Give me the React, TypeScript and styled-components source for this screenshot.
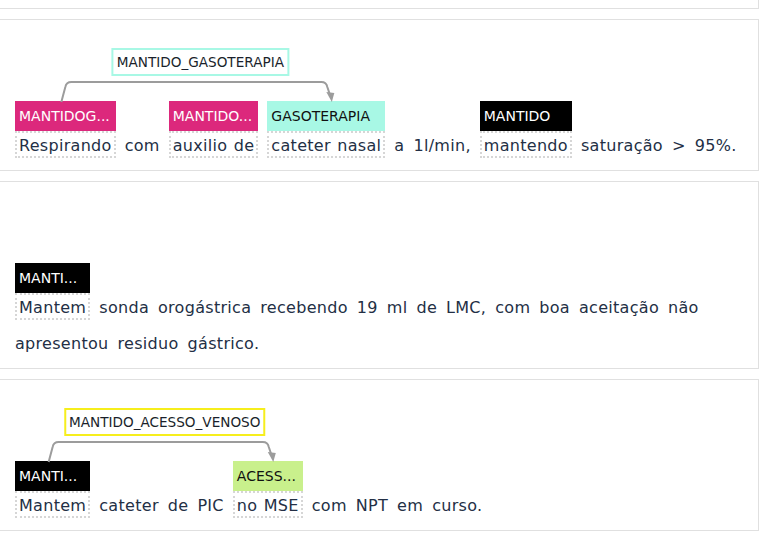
import React, { useLayoutEffect, useRef, useState } from "react";
import styled, { createGlobalStyle } from "styled-components";

const Global = createGlobalStyle`
  html, body { margin: 0; padding: 0; background: #ffffff; }
  body { font-family: "DejaVu Sans", "Liberation Sans", sans-serif; overflow: hidden; }
`;

type Kind = "magenta" | "aqua" | "black" | "green";

const labelColors: Record<Kind, { bg: string; fg: string }> = {
  magenta: { bg: "#dc287c", fg: "#ffffff" },
  aqua: { bg: "#a8f8e5", fg: "#111111" },
  black: { bg: "#000000", fg: "#ffffff" },
  green: { bg: "#c9f08c", fg: "#111111" },
};

const relationBorders: Record<string, string> = {
  aqua: "#a8f8e5",
  yellow: "#f6ee1c",
};

interface Token {
  id?: string;
  text: string;
  label?: string;
  kind?: Kind;
}

interface Relation {
  from: string;
  to: string;
  label: string;
  color: string;
}

interface Sentence {
  tokens: Token[];
  relations: Relation[];
}

const words = (s: string): Token[] => s.split(" ").map((text) => ({ text }));

const sentences: Sentence[] = [
  {
    tokens: [
      { id: "a", text: "Respirando", label: "MANTIDOG...", kind: "magenta" },
      ...words("com"),
      { id: "b", text: "auxilio de", label: "MANTIDO...", kind: "magenta" },
      { id: "c", text: "cateter nasal", label: "GASOTERAPIA", kind: "aqua" },
      ...words("a 1l/min,"),
      { id: "d", text: "mantendo", label: "MANTIDO", kind: "black" },
      ...words("saturação > 95%."),
    ],
    relations: [{ from: "a", to: "c", label: "MANTIDO_GASOTERAPIA", color: "aqua" }],
  },
  {
    tokens: [
      { id: "a", text: "Mantem", label: "MANTI...", kind: "black" },
      ...words(
        "sonda orogástrica recebendo 19 ml de LMC, com boa aceitação não apresentou residuo gástrico."
      ),
    ],
    relations: [],
  },
  {
    tokens: [
      { id: "a", text: "Mantem", label: "MANTI...", kind: "black" },
      ...words("cateter de PIC"),
      { id: "b", text: "no MSE", label: "ACESS...", kind: "green" },
      ...words("com NPT em curso."),
    ],
    relations: [{ from: "a", to: "b", label: "MANTIDO_ACESSO_VENOSO", color: "yellow" }],
  },
];

const Page = styled.div`
  display: flex;
  flex-direction: column;
  gap: 10px;
  width: 761px;
  margin-left: -2px;
  margin-top: -40px;
`;

const Card = styled.section`
  position: relative;
  border: 1px solid #e0e0e0;
  background: #ffffff;
  padding: 81px 12px 12px 16px;
`;

const StubCard = styled.div`
  height: 47px;
  border: 1px solid #e0e0e0;
  background: #ffffff;
`;

const Tokens = styled.div`
  display: flex;
  flex-wrap: wrap;
  align-items: flex-end;
  column-gap: 9px;
  row-gap: 9px;
`;

const TokenBox = styled.span`
  display: inline-flex;
  flex-direction: column;
`;

const Label = styled.span<{ $kind: Kind }>`
  box-sizing: border-box;
  width: 0;
  min-width: 100%;
  height: 30px;
  line-height: 30px;
  padding-left: 4px;
  font-size: 14px;
  white-space: nowrap;
  overflow: hidden;
  background: ${(p) => labelColors[p.$kind].bg};
  color: ${(p) => labelColors[p.$kind].fg};
`;

const Word = styled.span<{ $marked: boolean }>`
  border: ${(p) => (p.$marked ? "2px dotted #d6d6d6" : "2px solid transparent")};
  border-left-width: ${(p) => (p.$marked ? "2px" : "0")};
  border-right-width: ${(p) => (p.$marked ? "2px" : "0")};
  padding: 3px ${(p) => (p.$marked ? "2px" : "0")} 0;
  line-height: 20px;
  font-size: 16px;
  letter-spacing: 0.3px;
  word-spacing: 1px;
  color: #232f45;
  white-space: nowrap;
`;

const Overlay = styled.svg`
  position: absolute;
  left: 0;
  top: 0;
  width: 100%;
  height: 100%;
  pointer-events: none;
  overflow: visible;
`;

const RelationTag = styled.span<{ $color: string }>`
  position: absolute;
  transform: translateX(-50%);
  box-sizing: border-box;
  height: 28px;
  line-height: 24px;
  padding: 0 3px;
  border: 2px solid ${(p) => relationBorders[p.$color]};
  background: #ffffff;
  font-size: 13.6px;
  color: #1a1f2b;
  white-space: nowrap;
`;

interface Geo {
  sx: number;
  ex: number;
  top: number;
  mid: number;
  label: string;
  color: string;
}

function SentenceCard({ sentence }: { sentence: Sentence }) {
  const cardRef = useRef<HTMLElement>(null);
  const [geos, setGeos] = useState<Geo[]>([]);

  useLayoutEffect(() => {
    const measure = () => {
      const card = cardRef.current;
      if (!card) return;
      const base = card.getBoundingClientRect();
      const out: Geo[] = [];
      sentence.relations.forEach((r) => {
        const a = card.querySelector(`[data-label="${r.from}"]`) as HTMLElement | null;
        const b = card.querySelector(`[data-label="${r.to}"]`) as HTMLElement | null;
        if (!a || !b) return;
        const ra = a.getBoundingClientRect();
        const rb = b.getBoundingClientRect();
        const sx = ra.left - base.left + ra.width / 2 - 5;
        const ex = rb.left - base.left + rb.width / 2 + 4;
        out.push({
          sx,
          ex,
          top: ra.top - base.top,
          mid: (sx + ex) / 2 + 4,
          label: r.label,
          color: r.color,
        });
      });
      setGeos(out);
    };
    measure();
    window.addEventListener("resize", measure);
    return () => window.removeEventListener("resize", measure);
  }, [sentence]);

  return (
    <Card ref={cardRef}>
      <Tokens>
        {sentence.tokens.map((t, i) => (
          <TokenBox key={i}>
            {t.label && t.kind && (
              <Label $kind={t.kind} data-label={t.id}>
                {t.label}
              </Label>
            )}
            <Word $marked={!!t.label}>{t.text}</Word>
          </TokenBox>
        ))}
      </Tokens>
      {geos.length > 0 && (
        <Overlay>
          {geos.map((g, i) => {
            const h = g.top - 20;
            const d = `M ${g.sx} ${g.top} L ${g.sx + 4} ${h + 5} Q ${g.sx + 5} ${h} ${g.sx + 10} ${h} L ${g.ex - 10} ${h} Q ${g.ex - 5} ${h} ${g.ex - 4} ${h + 5} L ${g.ex - 1} ${g.top - 6}`;
            return (
              <g key={i}>
                <path d={d} fill="none" stroke="#9c9c9c" strokeWidth={2} strokeLinejoin="round" />
                <polygon
                  points={`${g.ex - 5},${g.top - 10} ${g.ex + 3},${g.top - 9} ${g.ex + 0.5},${g.top}`}
                  fill="#9c9c9c"
                />
              </g>
            );
          })}
        </Overlay>
      )}
      {geos.map((g, i) => (
        <RelationTag key={i} $color={g.color} style={{ left: g.mid, top: g.top - 54 }}>
          {g.label}
        </RelationTag>
      ))}
    </Card>
  );
}

export default function App() {
  return (
    <>
      <Global />
      <Page>
        <StubCard />
        {sentences.map((s, i) => (
          <SentenceCard key={i} sentence={s} />
        ))}
      </Page>
    </>
  );
}
